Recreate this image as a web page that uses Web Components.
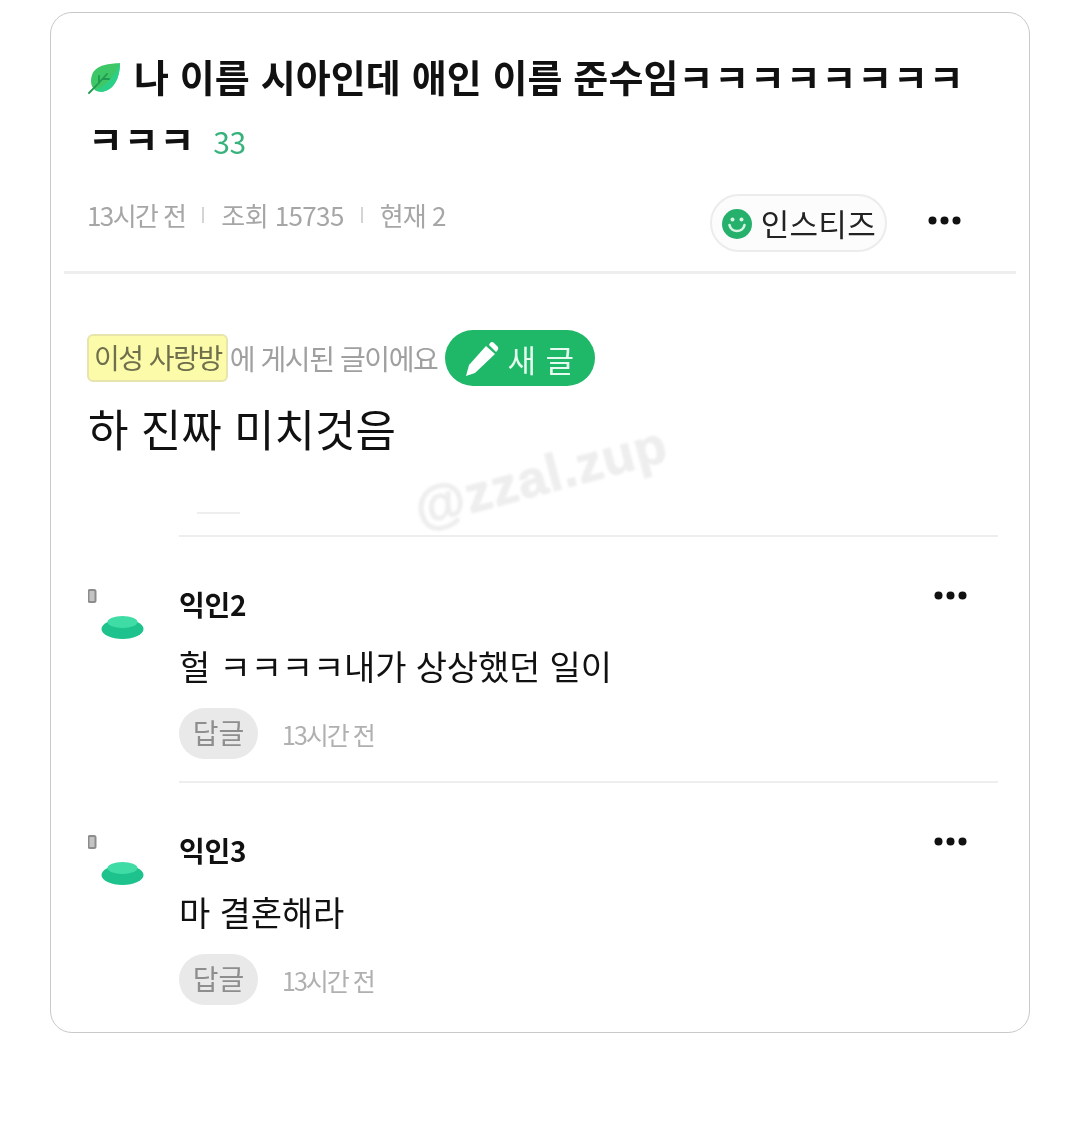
<!DOCTYPE html>
<html lang="ko">
<head>
<meta charset="utf-8">
<title>게시글</title>
<style>
  html, body { margin: 0; background: #fff; }
  body { font-family: "Noto Sans CJK KR", "Noto Sans", sans-serif; color: #111; height: 1146px; overflow: hidden; }
</style>
</head>
<body>
<post-card>
  <post-head count="33" meta-time="13시간 전" meta-views="조회 15735" meta-now="현재 2" channel="인스티즈">나 이름 시아인데 애인 이름 준수임<span>ㅋㅋㅋㅋㅋㅋㅋㅋ</span><span>ㅋㅋㅋ</span></post-head>
  <post-body board="이성 사랑방" note="에 게시된 글이에요" action="새 글">하 진짜 미치것음</post-body>
  <post-comment name="익인2" time="13시간 전">헐 ㅋㅋㅋㅋ내가 상상했던 일이</post-comment>
  <post-comment name="익인3" time="13시간 전">마 결혼해라</post-comment>
</post-card>

<script>
class MoreDots extends HTMLElement {
  connectedCallback() {
    if (this.shadowRoot) return;
    this.attachShadow({mode: 'open'}).innerHTML = `
      <style>
        :host { display: block; width: 33px; height: 9px; }
        svg { display: block; }
      </style>
      <svg width="33" height="9" viewBox="0 0 33 9"><g fill="#111">
        <circle cx="4.5" cy="4.5" r="4"/><circle cx="16.5" cy="4.5" r="4"/><circle cx="28.5" cy="4.5" r="4"/>
      </g></svg>
    `;
  }
}
customElements.define('more-dots', MoreDots);

class PostCard extends HTMLElement {
  constructor() {
    super();
    this.attachShadow({mode: 'open'}).innerHTML = `
      <style>
        :host {
          display: block;
          position: relative;
          box-sizing: border-box;
          width: 980px;
          height: 1021px;
          margin: 12px 0 0 50px;
          padding: 0 13px;
          border: 1px solid #c9c9c9;
          border-radius: 22px;
          background: #fff;
          overflow: hidden;
        }
        .mark {
          position: absolute;
          left: 360px;
          top: 433px;
          font: 700 52px "Liberation Sans", sans-serif;
          color: #eeeeee;
          -webkit-text-stroke: 1px #eeeeee;
          letter-spacing: 1px;
          transform: rotate(-15deg);
          filter: blur(.8px);
        }
      </style>
      <slot></slot>
      <div class="mark">@zzal.zup</div>
    `;
  }
}
customElements.define('post-card', PostCard);

class PostHead extends HTMLElement {
  connectedCallback() {
    if (this.shadowRoot) return;
    const get = name => this.getAttribute(name);
    this.attachShadow({mode: 'open'}).innerHTML = `
      <style>
        :host {
          display: block;
          padding: 32px 0 19px 24px;
          border-bottom: 3px solid #eeeeee;
          filter: blur(.4px);
        }
        .title {
          margin: 0;
          width: 880px;
          font-size: 38px;
          line-height: 62px;
          font-weight: 700;
          color: #111;
          word-break: break-all;
          letter-spacing: .1px;
        }
        ::slotted(span) { letter-spacing: .8px; }
        .leaf { width: 33px; height: 33px; margin: -10px 13px -10px 0; vertical-align: 8px; }
        .count { margin-left: 18px; font-size: 30px; font-weight: 400; color: #37b27c; letter-spacing: -.5px; }
        .meta {
          display: flex;
          align-items: flex-start;
          margin-top: 22px;
          height: 58px;
        }
        .info {
          display: flex;
          align-items: center;
          gap: 17px;
          height: 41px;
          margin-left: -1px;
          font-size: 26px;
          color: #a6a6a6;
          letter-spacing: -1.6px;
        }
        .views { letter-spacing: -.6px; }
        .now { letter-spacing: -1px; }
        .sep { width: 2px; height: 16px; background: #d4d4d4; }
        .channel {
          display: flex;
          align-items: center;
          gap: 9px;
          box-sizing: border-box;
          height: 58px;
          margin-left: auto;
          padding: 0 9px 2px 10px;
          border: 2px solid #ececec;
          border-radius: 29px;
          background: #fcfcfc;
          font-size: 31px;
          color: #222;
          letter-spacing: .3px;
        }
        .channel svg { flex: none; margin-top: 4px; }
        more-dots { margin: 22px 55px 0 41px; }
      </style>
      <h1 class="title"><svg class="leaf" viewBox="0 0 33 33">
          <path d="M32 2C22 3 8 3 4 14 2 20 3 26 7 29 11 32 19 31 24 26 30 20 32 10 32 2Z" fill="#3ec766"/>
          <path d="M32 2C32 10 30 20 24 26 19 31 11 32 7 29 16 27 26 17 32 2Z" fill="#2bd088"/>
          <path d="M1 32 8 25 19 13M11 22V15M15 18 21 18" stroke="#1f9a50" stroke-width="1.800" fill="none" stroke-linecap="round"/>
        </svg><slot></slot><span class="count">${get('count')}</span></h1>
      <div class="meta">
        <div class="info">
          <span>${get('meta-time')}</span><i class="sep"></i>
          <span class="views">${get('meta-views')}</span><i class="sep"></i>
          <span class="now">${get('meta-now')}</span>
        </div>
        <div class="channel">
          <svg width="30" height="30" viewBox="0 0 30 30">
            <circle cx="15" cy="15" r="15" fill="#25b06b"/>
            <circle cx="10.500" cy="10.500" r="2" fill="#d8f5e4"/><circle cx="19.500" cy="10.500" r="2" fill="#d8f5e4"/>
            <path d="M7.500 16C9 24 21 24 22.500 16" stroke="#d8f5e4" stroke-width="2.600" fill="none" stroke-linecap="round"/>
          </svg>
          <span>${get('channel')}</span>
        </div>
        <more-dots></more-dots>
      </div>
    `;
  }
}
customElements.define('post-head', PostHead);

class PostBody extends HTMLElement {
  connectedCallback() {
    if (this.shadowRoot) return;
    this.attachShadow({mode: 'open'}).innerHTML = `
      <style>
        :host { display: block; padding: 56px 0 21px 24px; filter: blur(.4px); }
        .line { display: flex; align-items: center; height: 56px; }
        .board {
          box-sizing: border-box;
          height: 48px;
          line-height: 43px;
          margin-left: -1px;
          padding: 0 4px 0 5px;
          border: 2px solid #e8e4ad;
          border-radius: 6px;
          background: #fcfba9;
          font-size: 28px;
          color: #6f6f4d;
          letter-spacing: -1.500px;
        }
        .note { margin-left: 2px; font-size: 28px; color: #a0a0a0; letter-spacing: -1.400px; }
        .action {
          display: flex;
          align-items: center;
          gap: 8px;
          box-sizing: border-box;
          width: 150px;
          height: 56px;
          margin-left: 8px;
          padding-left: 20px;
          border-radius: 28px;
          background: #1fb768;
          font-size: 31px;
          letter-spacing: .5px;
          color: #e6fbef;
        }
        .action svg { flex: none; }
        .text { margin: 12px 0 0; font-size: 44px; line-height: 60px; color: #111; }
        .rule { width: 43px; height: 2px; margin: 54px 0 0 109px; background: #eeeeee; }
      </style>
      <div class="line">
        <span class="board">${this.getAttribute('board')}</span>
        <span class="note">${this.getAttribute('note')}</span>
        <span class="action">
          <svg width="34" height="36" viewBox="0 0 34 36">
            <path d="M25 3Q27 1 29 3L33 7Q34 9 32 11L31 12 24 5Z" fill="#fff"/>
            <path d="M21 6 30 14 10 33 1 36 4 25Z" fill="#fff"/>
          </svg>
          <span>${this.getAttribute('action')}</span>
        </span>
      </div>
      <p class="text"><slot></slot></p>
      <div class="rule"></div>
    `;
  }
}
customElements.define('post-body', PostBody);

class PostComment extends HTMLElement {
  connectedCallback() {
    if (this.shadowRoot) return;
    this.attachShadow({mode: 'open'}).innerHTML = `
      <style>
        :host {
          display: grid;
          grid-template-columns: 91px 819px;
          margin-left: 24px;
          filter: blur(.4px);
        }
        .avatar { display: block; }
        .main {
          padding: 47px 0 22px;
          border-top: 2px solid #eeeeee;
        }
        .top { display: flex; justify-content: space-between; align-items: flex-start; height: 40px; }
        .name { font-size: 28px; line-height: 40px; font-weight: 700; color: #111; letter-spacing: -.2px; }
        more-dots { margin: 7px 31px 0 0; }
        .text { margin: 12px 0 0; font-size: 34px; line-height: 60px; color: #111; letter-spacing: -.15px; }
        .foot { display: flex; align-items: center; gap: 24px; margin-top: 12px; }
        .reply {
          box-sizing: border-box;
          width: 79px;
          height: 51px;
          line-height: 48px;
          text-align: center;
          border-radius: 26px;
          background: #e9e9e9;
          font-size: 28px;
          color: #8e8e8e;
        }
        .time { font-size: 25px; color: #b0b0b0; letter-spacing: -2px; }
      </style>
      <svg class="avatar" width="60" height="110" viewBox="0 0 60 110">
        <rect x="0.500" y="55" width="7" height="12" rx="1.500" fill="#c4c4c4" stroke="#8c8c8c" stroke-width="2"/>
        <ellipse cx="34.500" cy="94" rx="21" ry="10" fill="#1ec28c"/>
        <ellipse cx="34.500" cy="87" rx="15" ry="6" fill="#3fdca6"/>
      </svg>
      <div class="main">
        <div class="top"><span class="name">${this.getAttribute('name')}</span><more-dots></more-dots></div>
        <p class="text"><slot></slot></p>
        <div class="foot"><span class="reply">답글</span><span class="time">${this.getAttribute('time')}</span></div>
      </div>
    `;
  }
}
customElements.define('post-comment', PostComment);
</script>
</body>
</html>
